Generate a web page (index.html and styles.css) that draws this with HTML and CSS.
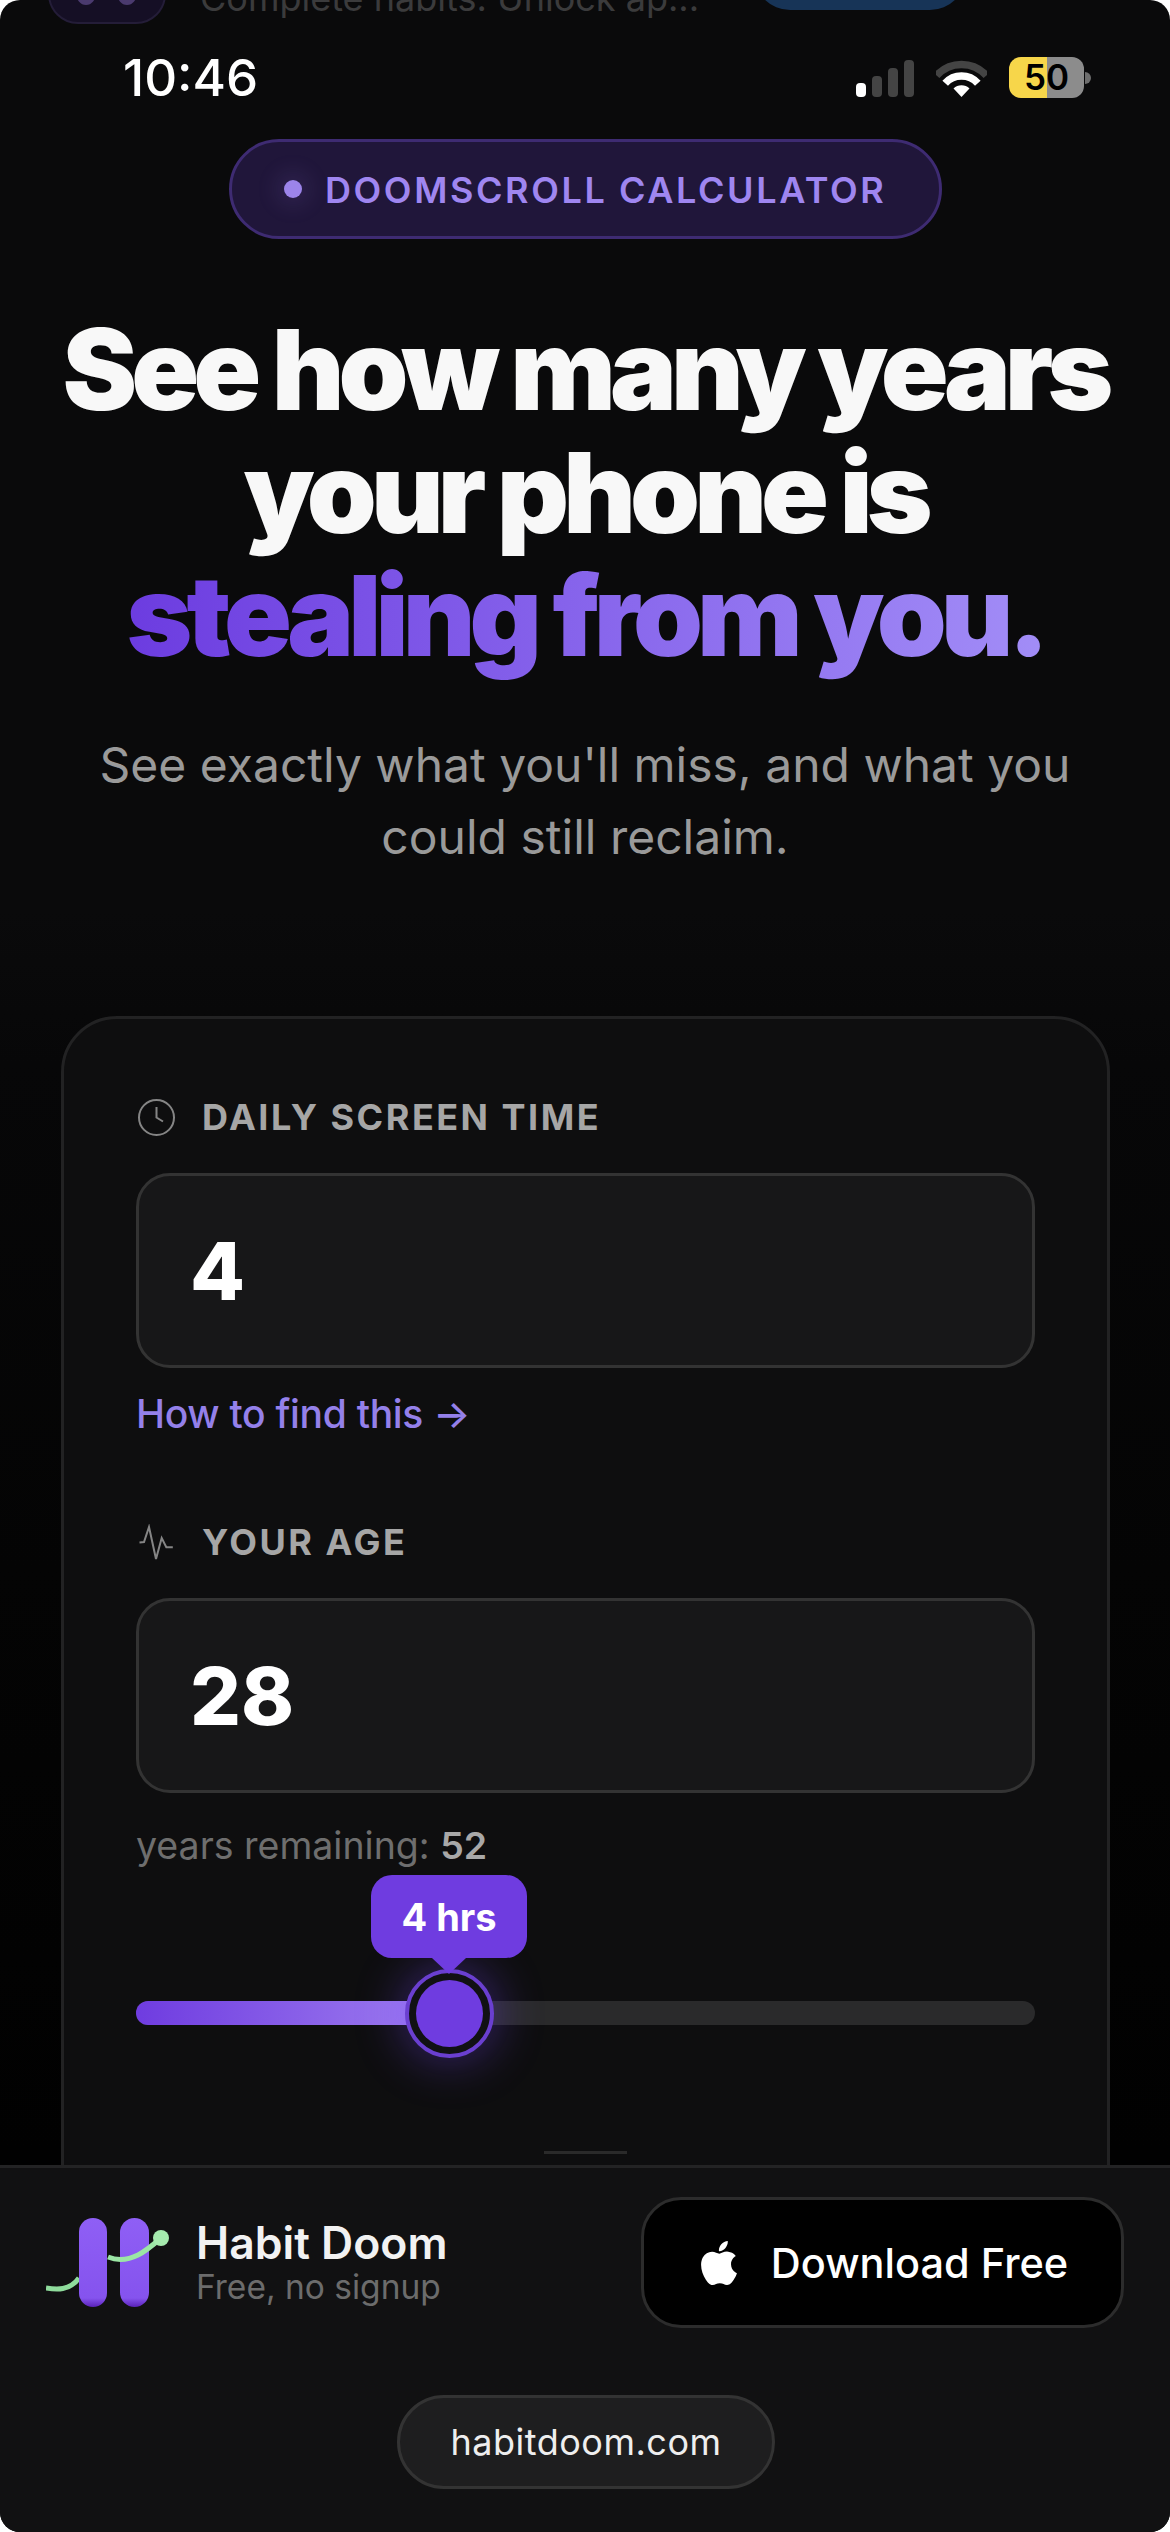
FILE: index.html
```html
<!DOCTYPE html>
<html lang="en">
<head>
<meta charset="utf-8">
<title>Doomscroll Calculator</title>
<link rel="stylesheet" href="styles.css">
</head>
<body>
<div class="screen">
  <div class="ghost">
    <div class="ghost-icon"><i></i><i></i></div>
    <div class="ghost-text">Complete habits. Unlock ap...</div>
    <div class="ghost-btn"></div>
  </div>

  <div class="status">
    <div class="time">10:46</div>
    <div class="status-right">
      <div class="signal"><span class="bar b1 on"></span><span class="bar b2"></span><span class="bar b3"></span><span class="bar b4"></span></div>
      <svg class="wifi" viewBox="0 0 51 37" aria-hidden="true">
        <path d="M0.6 15.6A33.5 33.5 0 0 1 50.4 15.6" fill="none" stroke="#444" stroke-width="7.5"/>
        <path d="M9.2 23.3A22 22 0 0 1 41.8 23.3" fill="none" stroke="#fff" stroke-width="7.5"/>
        <path d="M25.5 37L17.5 28.4A11.5 11.5 0 0 1 33.5 28.4Z" fill="#fff"/>
      </svg>
      <div class="battery"><span class="battery-num">50</span></div>
      <span class="nub"></span>
    </div>
  </div>

  <div class="pill"><span class="pill-dot"></span><span class="pill-text">DOOMSCROLL CALCULATOR</span></div>

  <h1 class="title">See how many years<br>your phone is<br><span class="accent">stealing from you.</span></h1>
  <p class="sub">See exactly what you'll miss, and what you<br>could still reclaim.</p>

  <section class="card">
    <div class="label">
      <svg class="label-icon" viewBox="0 0 37 37" aria-hidden="true">
        <circle cx="18.5" cy="18.5" r="17.5"/>
        <path d="M18.5 8V18.5L25 22.5"/>
      </svg>
      <span>DAILY SCREEN TIME</span>
    </div>
    <div class="field">4</div>
    <div class="link">How to find this →</div>

    <div class="label label-age">
      <svg class="label-icon" viewBox="0 0 37 37" aria-hidden="true">
        <path d="M1.5 18.5L6 18L11 3L18 35L23.7 14L28.3 23.3L34.8 23.3"/>
      </svg>
      <span>YOUR AGE</span>
    </div>
    <div class="field">28</div>
    <div class="remaining">years remaining: <strong>52</strong></div>

    <div class="slider">
      <div class="slider-fill"></div>
      <div class="thumb"><span class="thumb-core"></span></div>
      <div class="bubble">4 hrs</div>
    </div>

    <div class="divider"></div>
  </section>

  <footer class="footer">
    <div class="cta">
      <div class="brand">
        <svg class="logo" viewBox="0 0 124 90" aria-hidden="true">
          <defs>
            <linearGradient id="barFill" x1="0" y1="0" x2="0" y2="1">
              <stop offset="0" stop-color="#8f5ff5"/>
              <stop offset=".9" stop-color="#8553ee"/>
              <stop offset="1" stop-color="#5a22b8"/>
            </linearGradient>
          </defs>
          <path d="M0 70C10 71.500 24 73 33 60" fill="none" stroke="#8fdc9c" stroke-width="5"/>
          <rect x="33" y="0" width="28" height="89" rx="14" fill="url(#barFill)"/>
          <rect x="74" y="0" width="29" height="89" rx="14.500" fill="url(#barFill)"/>
          <path d="M62 39C72 43 82 42 92 37C100 33 107 27 115 20" fill="none" stroke="#9be6a5" stroke-width="5"/>
          <circle cx="115" cy="20" r="8" fill="#a6ebae"/>
        </svg>
        <div class="brand-text">
          <div class="brand-name">Habit Doom</div>
          <div class="brand-sub">Free, no signup</div>
        </div>
      </div>
      <div class="download">
        <svg class="apple" viewBox="0 0 24 24" aria-hidden="true"><path d="M12.152 6.896c-.948 0-2.415-1.078-3.96-1.04-2.04.027-3.91 1.183-4.961 3.014-2.117 3.675-.546 9.103 1.519 12.09 1.013 1.454 2.208 3.09 3.792 3.039 1.52-.065 2.09-.987 3.935-.987 1.831 0 2.35.987 3.96.948 1.637-.026 2.676-1.48 3.676-2.948 1.156-1.688 1.636-3.325 1.662-3.415-.039-.013-3.182-1.221-3.22-4.857-.026-3.04 2.48-4.494 2.597-4.559-1.429-2.09-3.623-2.324-4.39-2.376-2-.156-3.675 1.09-4.61 1.09zM15.53 3.83c.843-1.012 1.4-2.427 1.245-3.83-1.207.052-2.662.805-3.532 1.818-.78.896-1.454 2.338-1.273 3.714 1.338.104 2.715-.688 3.559-1.701"/></svg>
        <span>Download Free</span>
      </div>
    </div>
    <div class="domain-row"><div class="domain">habitdoom.com</div></div>
  </footer>
</div>
</body>
</html>
```

FILE: styles.css
```css
* { box-sizing: border-box; }
html, body { margin: 0; padding: 0; background: #fff; }
body { font-family: Inter, "Noto Sans", sans-serif; }

.screen {
  position: relative;
  width: 1170px;
  height: 2532px;
  overflow: hidden;
  border-radius: 20px;
  background: linear-gradient(180deg, #0a0a0b 0, #0a0a0b 36%, #070708 42%, #040404 62%, #010101 85%);
}

/* scrolled-away banner peeking out above the status bar */
.ghost { position: absolute; top: 0; left: 0; width: 100%; height: 30px; overflow: hidden; }
.ghost-icon {
  position: absolute; left: 48px; top: -90px; width: 118px; height: 114px;
  border-radius: 30px; background: #150f25; border: 2px solid #241d38;
}
.ghost-icon i { position: absolute; top: 69px; width: 20px; height: 24px; border-radius: 50%; background: #4a3a6e; }
.ghost-icon i:first-child { left: 26px; }
.ghost-icon i:last-child { left: 67px; }
.ghost-text {
  position: absolute; left: 200px; bottom: 10px; font-size: 36px; line-height: 44px;
  color: #3b3b3c; white-space: nowrap;
}
.ghost-btn {
  position: absolute; left: 754px; top: -62px; width: 212px; height: 72px;
  border-radius: 36px; background: #173457;
}

/* status bar */
.status { display: flex; justify-content: space-between; align-items: center; height: 41px; margin-top: 57px; padding: 0 79px 0 123px; position: relative; }
.time { font-size: 51px; line-height: 41px; font-weight: 500; color: #fff; }
.status-right { display: flex; align-items: center; }
.signal { display: flex; align-items: flex-end; gap: 6px; height: 37px; margin-top: 2px; }
.bar { display: block; width: 10px; border-radius: 4px; background: #444; }
.b1 { height: 14px; }
.b2 { height: 21px; }
.b3 { height: 29px; }
.b4 { height: 37px; }
.bar.on { background: #fff; }
.wifi { display: block; width: 51px; height: 37px; margin: 1px 22px 0 22px; }
.battery {
  display: flex; align-items: center; justify-content: center;
  width: 75px; height: 41px; border-radius: 12px;
  background: linear-gradient(90deg, #f7d64a 0, #f7d64a 50.5%, #8c8c8c 50.5%, #8c8c8c 100%);
}
.battery-num { font-size: 35px; line-height: 41px; font-weight: 600; color: #000; }
.nub { display: block; width: 6px; height: 12px; margin-left: 1px; border-radius: 0 6px 6px 0; background: #6e6e6e; }

/* pill */
.pill {
  display: flex; align-items: center; width: 713px; height: 100px; margin: 41px 0 0 229px;
  padding-left: 52px; border-radius: 50px; border: 3px solid #3e2b72;
  background: #20163a;
}
.pill-dot { width: 18px; height: 18px; border-radius: 50%; background: #9c84ea; box-shadow: 0 0 22px 8px rgba(156, 132, 234, .12); }
.pill-text { margin-left: 23px; padding-top: 2px; font-size: 36px; line-height: 44px; font-weight: 600; letter-spacing: 2.6px; color: #9f86f0; white-space: nowrap; }

/* hero */
.title {
  margin: 69px 0 0; text-align: center; font-size: 112px; line-height: 123px;
  font-weight: 900; letter-spacing: -5.9px; color: #f8f8f8;
}
.accent {
  background: linear-gradient(90deg, #6c3ce0 0, #a28df7 100%);
  -webkit-background-clip: text; background-clip: text; color: transparent;
}
.sub { margin: 52px 0 0; text-align: center; font-size: 48px; line-height: 72px; color: #9a9a9a; }

/* card */
.card {
  margin: 143px 60px 0 61px; padding: 76px 72px 120px;
  border: 3px solid #222223; border-radius: 56px; background: #0e0e0f;
}
.label { display: flex; align-items: center; height: 44px; font-size: 36px; line-height: 44px; font-weight: 700; letter-spacing: 2.5px; color: #a6a6a6; }
.label-age { margin-top: 82px; }
.label-icon { display: block; width: 37px; height: 37px; margin: 0 27px 0 2px; fill: none; stroke: #858585; stroke-width: 2; flex: none; }
.field {
  display: flex; align-items: center; height: 195px; margin-top: 34px; padding-left: 51px;
  border: 3px solid #333; border-radius: 34px; background: #171718;
  font-size: 80px; line-height: 96px; font-weight: 800; color: #fff;
}
.link { margin-top: 22px; font-size: 39px; line-height: 48px; font-weight: 500; letter-spacing: -.3px; color: #9480ea; }
.remaining { margin-top: 29px; font-size: 37.5px; line-height: 48px; color: #6e6e6e; }
.remaining strong { font-weight: 600; color: #a8a8a8; }

/* slider */
.slider { position: relative; height: 24px; margin-top: 131px; border-radius: 12px; background: #2a2a2b; }
.slider-fill { width: 313px; height: 24px; border-radius: 12px 0 0 12px; background: linear-gradient(90deg, #6f3ce0 0, #a080f0 100%); }
.thumb {
  position: absolute; left: 269px; top: -32px; width: 89px; height: 89px;
  display: flex; align-items: center; justify-content: center;
  border: 4px solid #6a3fd0; border-radius: 50%; background: #111114;
  box-shadow: 0 0 50px rgba(120, 70, 255, .45);
}
.thumb-core { display: block; width: 67px; height: 67px; border-radius: 50%; background: #6f3ce0; }
.bubble {
  position: absolute; left: 235px; top: -126px; width: 156px; height: 83px;
  display: flex; align-items: center; justify-content: center;
  border-radius: 21px; background: #6f3ce0;
  font-size: 38px; line-height: 48px; font-weight: 700; color: #fff;
}
.bubble::after {
  content: ""; position: absolute; left: 61px; top: 83px; width: 34px; height: 16px;
  background: #6f3ce0; clip-path: polygon(0 0, 100% 0, 50% 100%);
}
.divider { width: 83px; height: 3px; margin: 126px auto 0; background: #2a2a2a; }

/* footer */
.footer {
  position: absolute; left: 0; right: 0; bottom: 0; height: 367px; padding-top: 29px;
  border-top: 3px solid #232324; background: #111112;
}
.cta { display: flex; align-items: center; justify-content: space-between; padding: 0 46px; }
.brand { display: flex; align-items: center; }
.logo { display: block; width: 124px; height: 90px; flex: none; }
.brand-text { margin-left: 26px; padding-top: 6px; }
.brand-name { font-size: 44.5px; line-height: 43px; font-weight: 600; color: #f2f2f2; }
.brand-sub { font-size: 33.5px; line-height: 44px; color: #6c6c6c; }
.download {
  display: flex; align-items: center; justify-content: center; width: 483px; height: 131px;
  border: 3px solid #2c2c2c; border-radius: 40px; background: #000;
  font-size: 41.500px; line-height: 50px; font-weight: 500; color: #fff;
}
.apple { display: block; width: 44px; height: 44px; margin-right: 30px; fill: #fff; }
.domain-row { display: flex; justify-content: center; margin-top: 67px; padding-left: 2px; }
.domain {
  display: flex; align-items: center; justify-content: center; width: 378px; height: 94px;
  border: 3px solid #333; border-radius: 47px; background: #1e1e1f;
  font-size: 36px; line-height: 48px; letter-spacing: .5px; color: #eee;
}
```
